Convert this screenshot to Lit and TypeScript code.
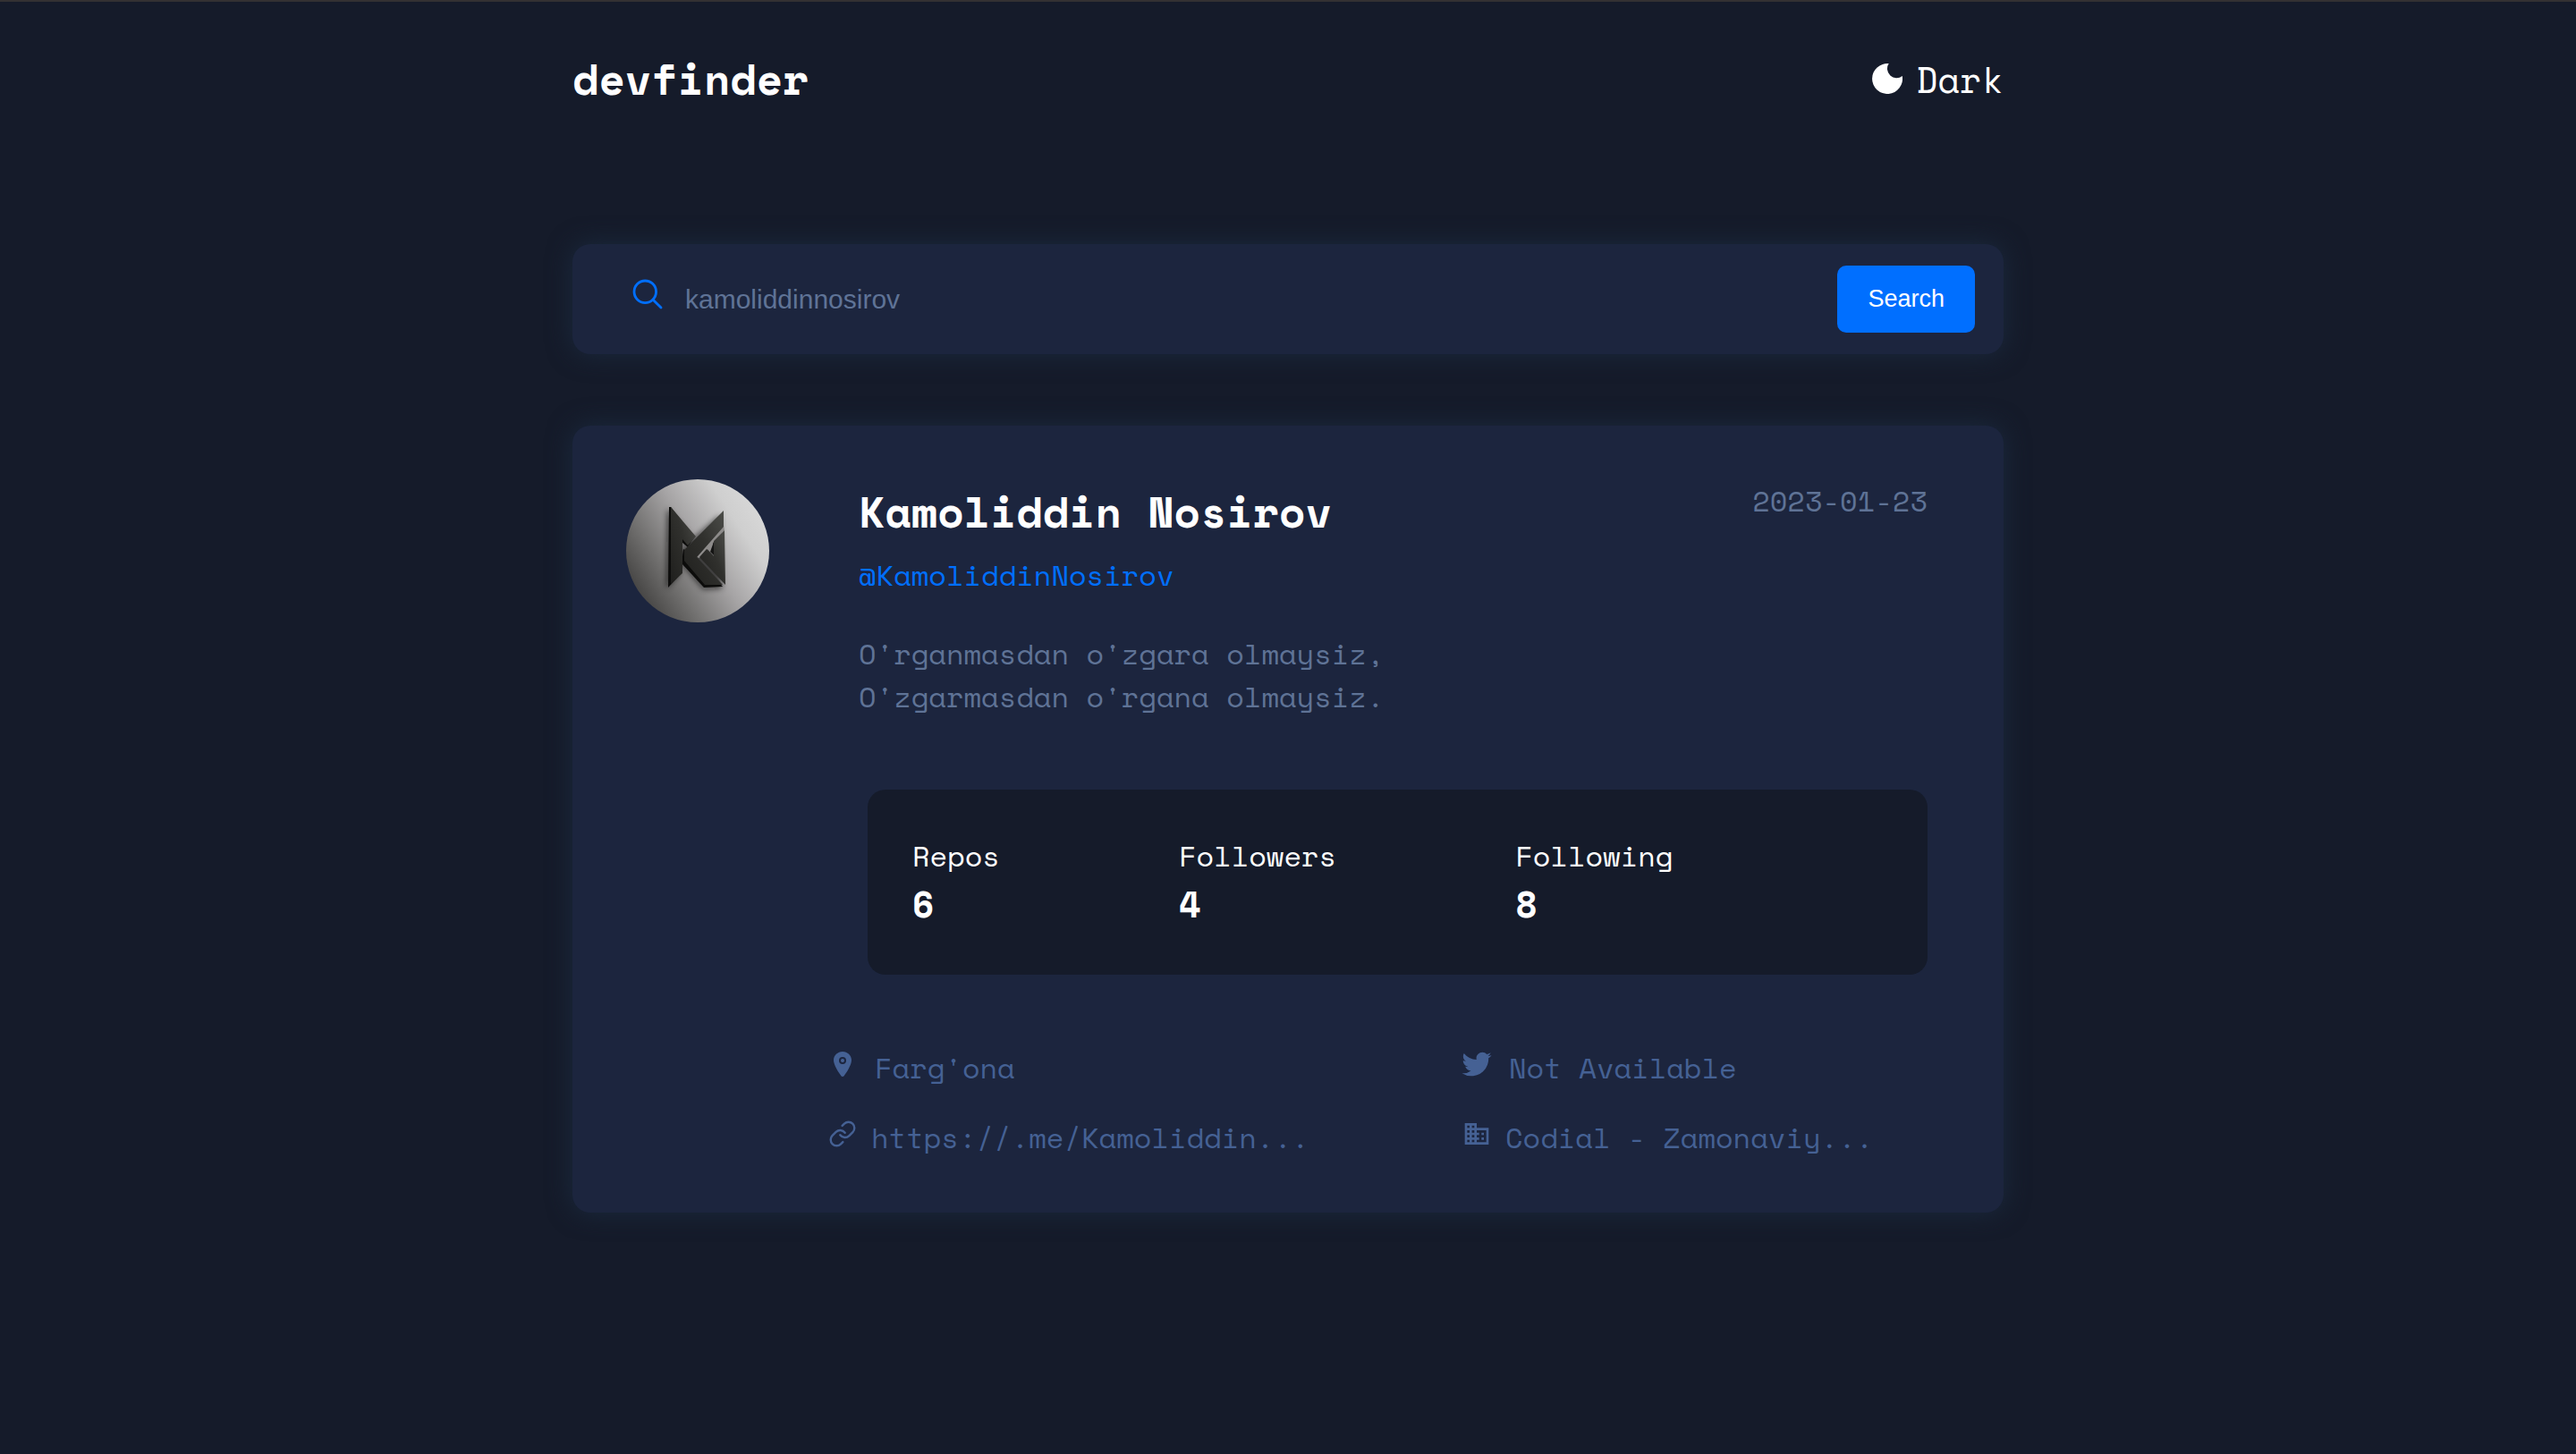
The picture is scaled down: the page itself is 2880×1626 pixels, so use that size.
import { LitElement, html, css, svg } from "lit";
import { customElement, property } from "lit/decorators.js";

const icons = {
  location: svg`<svg viewBox="0 0 512 512" fill="currentColor" aria-hidden="true"><circle cx="256" cy="192" r="32"/><path d="M256 32c-88.22 0-160 68.65-160 153 0 40.17 18.31 93.59 54.42 158.78 29 52.34 62.55 99.67 80 123.22a31.75 31.75 0 0051.22 0c17.42-23.55 51-70.88 80-123.22C397.69 278.61 416 225.19 416 185c0-84.35-71.78-153-160-153zm0 224a64 64 0 1164-64 64.07 64.07 0 01-64 64z"/></svg>`,
  twitter: svg`<svg viewBox="24 32 464 448" fill="currentColor" aria-hidden="true"><path d="M496 109.5a201.8 201.8 0 01-56.55 15.3 97.51 97.51 0 0043.33-53.6 197.74 197.74 0 01-62.56 23.5A99.14 99.14 0 00348.31 64c-54.42 0-98.46 43.4-98.46 96.9a93.21 93.21 0 002.54 22.1 280.7 280.7 0 01-203-101.3A95.69 95.69 0 0036 130.4c0 33.6 17.53 63.3 44 80.7A97.5 97.5 0 0135.22 199v1.2c0 47 34 86.1 79 95a100.76 100.76 0 01-25.94 3.4 94.38 94.38 0 01-18.51-1.8c12.51 38.5 48.92 66.5 92.05 67.3A199.59 199.59 0 0139.5 405.6a203 203 0 01-23.5-1.4A278.68 278.68 0 00166.74 448c181.36 0 280.44-147.7 280.44-275.8 0-4.2-.11-8.4-.31-12.5A198.48 198.48 0 00496 109.5z"/></svg>`,
  link: svg`<svg viewBox="0 0 24 24" fill="none" stroke="currentColor" stroke-width="1.8" stroke-linecap="round" stroke-linejoin="round" aria-hidden="true"><path d="M10 13a5 5 0 0 0 7.54.54l3-3a5 5 0 0 0-7.07-7.07l-1.72 1.71"/><path d="M14 11a5 5 0 0 0-7.54-.54l-3 3a5 5 0 0 0 7.07 7.07l1.71-1.71"/></svg>`,
  company: svg`<svg viewBox="0 0 24 24" fill="currentColor" aria-hidden="true"><path d="M12 7V3H2v18h20V7H12zM6 19H4v-2h2v2zm0-4H4v-2h2v2zm0-4H4V9h2v2zm0-4H4V5h2v2zm4 12H8v-2h2v2zm0-4H8v-2h2v2zm0-4H8V9h2v2zm0-4H8V5h2v2zm10 12h-8v-2h2v-2h-2v-2h2v-2h-2V9h8v10zm-2-8h-2v2h2v-2zm0 4h-2v2h2v-2z"/></svg>`,
  search: svg`<svg class="search-icon" viewBox="0 0 512 512" fill="none" stroke="currentColor" stroke-width="36" aria-hidden="true"><circle cx="221.09" cy="221.09" r="157.09"/><path d="M338.29 338.29L448 448" stroke-linecap="round"/></svg>`,
  moon: svg`<svg class="moon" viewBox="0 0 34 34" fill="currentColor" aria-hidden="true"><path d="M18.7 .1A17 17 0 1 0 33.8 14A10.4 10.4 0 0 1 18.7 .1z"/></svg>`,
};

const user = {
  name: "Kamoliddin Nosirov",
  login: "KamoliddinNosirov",
  joined: "2023-01-23",
  bio: ["O'rganmasdan o'zgara olmaysiz,", "O'zgarmasdan o'rgana olmaysiz."],
  stats: [
    { label: "Repos", value: 6 },
    { label: "Followers", value: 4 },
    { label: "Following", value: 8 },
  ],
};

@customElement("user-avatar")
class UserAvatar extends LitElement {
  static styles = css`
    :host {
      display: block;
      width: 160px;
      height: 160px;
      border-radius: 50%;
      overflow: hidden;
    }
    .art {
      display: block;
      width: 100%;
      height: 100%;
    }
  `;
  render() {
    return html`<svg class="art" viewBox="0 0 160 160" role="img" aria-label="Avatar">
      <defs>
        <linearGradient id="wall" x1="0.08" y1="0.8" x2="0.92" y2="0.25">
          <stop offset="0" stop-color="#454443" />
          <stop offset="0.25" stop-color="#71706f" />
          <stop offset="0.55" stop-color="#a6a4a5" />
          <stop offset="0.85" stop-color="#cfcfcf" />
          <stop offset="1" stop-color="#d6d6d6" />
        </linearGradient>
        <linearGradient id="metal" x1="0" y1="1" x2="1" y2="0">
          <stop offset="0" stop-color="#1f1f1d" />
          <stop offset="0.55" stop-color="#30302d" />
          <stop offset="1" stop-color="#4c4d49" />
        </linearGradient>
        <filter id="soft" x="-30%" y="-30%" width="160%" height="160%">
          <feGaussianBlur stdDeviation="3" />
        </filter>
      </defs>
      <rect width="160" height="160" fill="url(#wall)" />
      <g fill="#111" opacity="0.65" filter="url(#soft)">
        <path d="M46 33L76 68L60 70L60 106L45 122z" />
        <path d="M105 40L107 122L86 123L60 92L62 78z" />
      </g>
      <g fill="#0c0c0b">
        <path d="M48 31L50 31L76 65L69 76L62 70L62 105L47 121z" />
        <path d="M64 78L79 88L108 120L87 121L62 94z" />
      </g>
      <path d="M109 52L110 57L82 88L79 87z" fill="#8d8b8a" />
      <path d="M90 77L97 70L98 86z" fill="#8d8b8a" />
      <g fill="url(#metal)">
        <path d="M50 31L78 64L69 74L63 67L63 105L50 117z" />
        <path d="M109 35L109 53L79 87L108 118L88 118L65 91L65 79z" />
        <path d="M110 57L111 118L82 87L90 78L98 86L98 69z" />
      </g>
      <path d="M98 70L98 85L94 81z" fill="#151514" />
    </svg>`;
  }
}

@customElement("info-item")
class InfoItem extends LitElement {
  @property() icon: keyof typeof icons = "link";
  @property() href = "";
  static styles = css`
    :host {
      display: flex;
      gap: var(--info-gap);
      line-height: 48px;
      color: #456194;
    }
    .icon {
      padding-top: 4px;
      line-height: 0;
    }
    .icon svg {
      width: 32px;
      height: 32px;
      overflow: visible;
    }
    .link {
      color: inherit;
      text-decoration: none;
    }
  `;
  render() {
    return html`<span class="icon">${icons[this.icon]}</span>
      ${this.href ? html`<a class="link" href=${this.href}><slot></slot></a>` : html`<span><slot></slot></span>`}`;
  }
}

@customElement("app-root")
class AppRoot extends LitElement {
  static styles = css`
    :host {
      display: block;
      box-sizing: border-box;
      min-height: 100vh;
      border-top: 2px solid #333133;
      background: #151b2a;
      color: #fff;
      font: 32px/48px "Space Mono", "DejaVu Sans Mono", monospace;
    }
    .page {
      width: 1600px;
      max-width: 100%;
      margin: 0 auto;
    }
    .header {
      display: flex;
      justify-content: space-between;
      align-items: center;
      padding: 50px 0;
      margin-bottom: 99px;
    }
    .brand,
    .name {
      margin: 0;
      font-size: 48px;
      line-height: 72px;
      font-weight: 700;
    }
    .theme {
      display: flex;
      align-items: center;
      gap: 15px;
      padding: 0;
      border: 0;
      background: none;
      color: inherit;
      font-family: inherit;
      font-size: 40px;
      cursor: pointer;
    }
    .moon {
      width: 34px;
      height: 34px;
    }
    .search,
    .card {
      border-radius: 20px;
      background: #1c253e;
      box-shadow: 0 0 28px #1b2a3e;
    }
    .search {
      display: flex;
      align-items: center;
      padding: 24px 32px 24px 64px;
      margin-bottom: 80px;
    }
    .field {
      flex: 1;
      display: flex;
      gap: 22px;
    }
    .search-icon {
      width: 40px;
      height: 40px;
      color: #006fff;
    }
    .input {
      flex: 1;
      padding: 0;
      border: 0;
      outline: 0;
      background: none;
      color: #fff;
      height: 52px;
      font: 30px "Liberation Sans", Arial, sans-serif;
    }
    .input::placeholder {
      color: #5f7396;
      opacity: 1;
    }
    .submit {
      height: 75px;
      padding: 0 34px;
      border: 0;
      border-radius: 10px;
      background: #006fff;
      color: #fff;
      font: 27px "Liberation Sans", Arial, sans-serif;
      cursor: pointer;
    }
    .card {
      padding: 60px 85px 60px 60px;
    }
    .profile {
      display: flex;
      align-items: flex-start;
      gap: 100px;
    }
    .body {
      flex: 1;
    }
    .top {
      display: flex;
      justify-content: space-between;
    }
    .login {
      display: block;
      margin-top: 11px;
      color: #006fff;
      text-decoration: none;
    }
    .date,
    .bio {
      color: #5f7396;
    }
    .bio {
      margin: 40px 0 80px;
    }
    .stats {
      display: flex;
      gap: 200px;
      margin: 0 0 80px 10px;
      padding: 50px 50px 49px;
      border-radius: 20px;
      background: #151b2a;
    }
    .value {
      margin: 0;
      font-size: 40px;
      line-height: 60px;
      font-weight: 700;
    }
    .info {
      display: grid;
      grid-template-columns: 15fr 11fr;
      row-gap: 30px;
      margin-left: 226px;
    }
    .place {
      --info-gap: 20px;
    }
    .work {
      --info-gap: 16px;
    }
  `;
  render() {
    return html`<div class="page">
      <header class="header">
        <h1 class="brand">devfinder</h1>
        <button class="theme" type="button">${icons.moon}<span>Dark</span></button>
      </header>
      <main>
        <form class="search" @submit=${(e: Event) => e.preventDefault()}>
          <label class="field"
            >${icons.search}<input class="input" type="text" aria-label="GitHub username" placeholder="kamoliddinnosirov"
          /></label>
          <button class="submit" type="submit">Search</button>
        </form>
        <article class="card">
          <div class="profile">
            <user-avatar></user-avatar>
            <div class="body">
              <div class="top">
                <div>
                  <h2 class="name">${user.name}</h2>
                  <a class="login" href="https://github.com/${user.login}">@${user.login}</a>
                </div>
                <time class="date" datetime=${user.joined}>${user.joined}</time>
              </div>
              <p class="bio">${user.bio[0]}<br />${user.bio[1]}</p>
              <dl class="stats">
                ${user.stats.map((s) => html`<div><dt>${s.label}</dt><dd class="value">${s.value}</dd></div>`)}
              </dl>
            </div>
          </div>
          <div class="info">
            <info-item class="place" icon="location">Farg'ona</info-item>
            <info-item class="place" icon="twitter">Not Available</info-item>
            <info-item class="work" icon="link" href="#">https://.me/Kamoliddin...</info-item>
            <info-item class="work" icon="company">Codial - Zamonaviy...</info-item>
          </div>
        </article>
      </main>
    </div>`;
  }
}
